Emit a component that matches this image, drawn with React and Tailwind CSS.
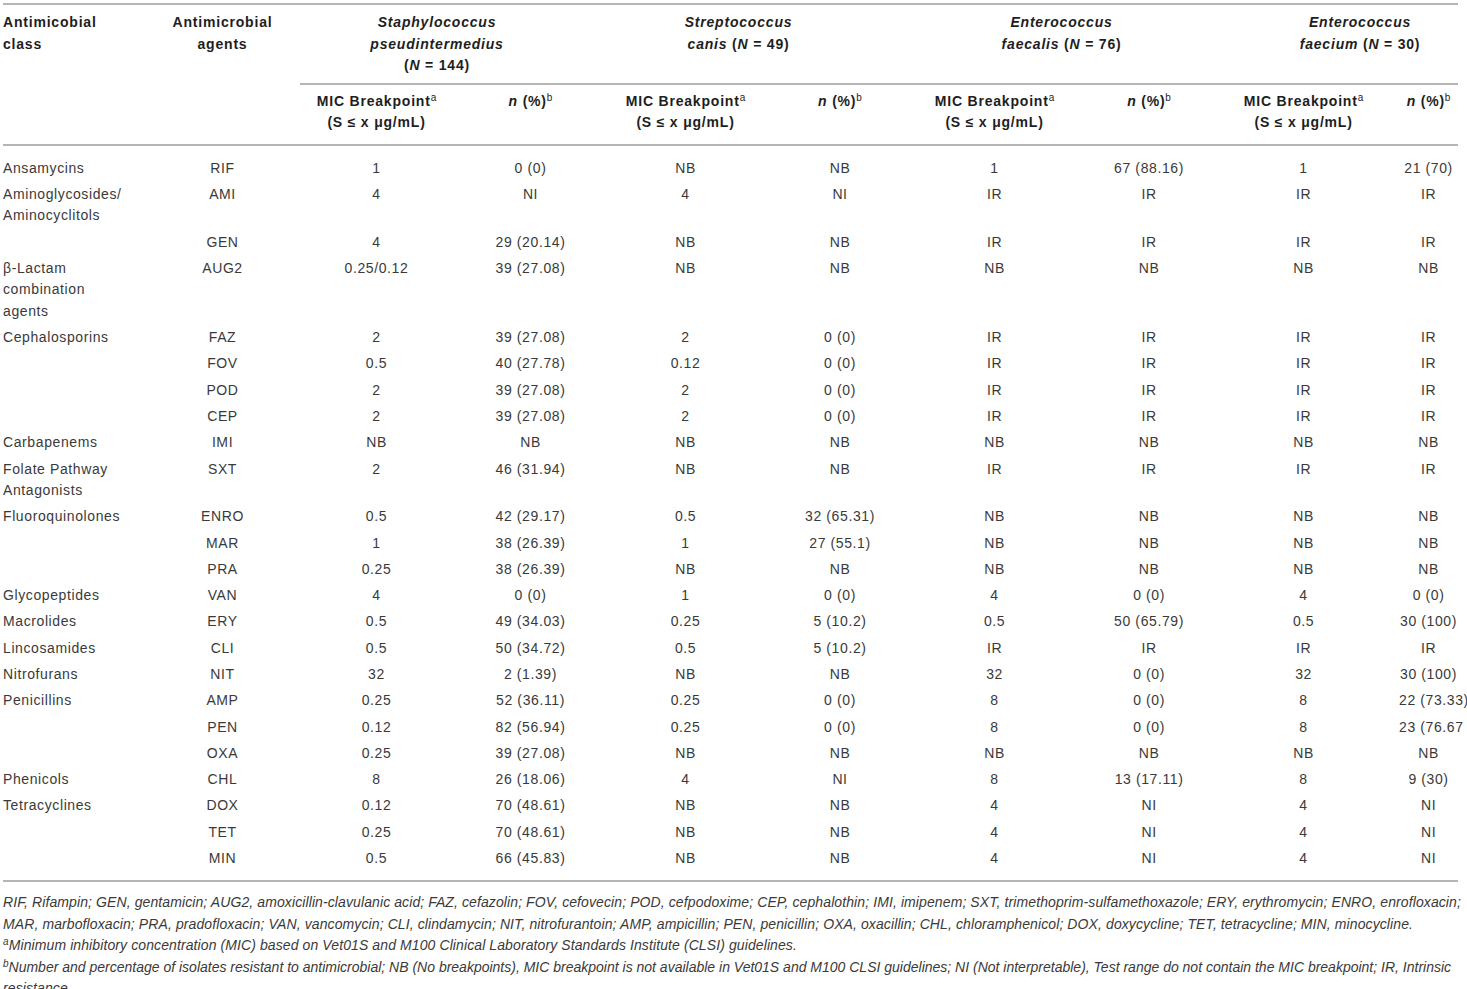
import React from "react";

const rows = [
    ["Ansamycins", "RIF", "1", "0 (0)", "NB", "NB", "1", "67 (88.16)", "1", "21 (70)"],
    [["Aminoglycosides/", "Aminocyclitols"], "AMI", "4", "NI", "4", "NI", "IR", "IR", "IR", "IR"],
    ["", "GEN", "4", "29 (20.14)", "NB", "NB", "IR", "IR", "IR", "IR"],
    [["β-Lactam", "combination", "agents"], "AUG2", "0.25/0.12", "39 (27.08)", "NB", "NB", "NB", "NB", "NB", "NB"],
    ["Cephalosporins", "FAZ", "2", "39 (27.08)", "2", "0 (0)", "IR", "IR", "IR", "IR"],
    ["", "FOV", "0.5", "40 (27.78)", "0.12", "0 (0)", "IR", "IR", "IR", "IR"],
    ["", "POD", "2", "39 (27.08)", "2", "0 (0)", "IR", "IR", "IR", "IR"],
    ["", "CEP", "2", "39 (27.08)", "2", "0 (0)", "IR", "IR", "IR", "IR"],
    ["Carbapenems", "IMI", "NB", "NB", "NB", "NB", "NB", "NB", "NB", "NB"],
    [["Folate Pathway", "Antagonists"], "SXT", "2", "46 (31.94)", "NB", "NB", "IR", "IR", "IR", "IR"],
    ["Fluoroquinolones", "ENRO", "0.5", "42 (29.17)", "0.5", "32 (65.31)", "NB", "NB", "NB", "NB"],
    ["", "MAR", "1", "38 (26.39)", "1", "27 (55.1)", "NB", "NB", "NB", "NB"],
    ["", "PRA", "0.25", "38 (26.39)", "NB", "NB", "NB", "NB", "NB", "NB"],
    ["Glycopeptides", "VAN", "4", "0 (0)", "1", "0 (0)", "4", "0 (0)", "4", "0 (0)"],
    ["Macrolides", "ERY", "0.5", "49 (34.03)", "0.25", "5 (10.2)", "0.5", "50 (65.79)", "0.5", "30 (100)"],
    ["Lincosamides", "CLI", "0.5", "50 (34.72)", "0.5", "5 (10.2)", "IR", "IR", "IR", "IR"],
    ["Nitrofurans", "NIT", "32", "2 (1.39)", "NB", "NB", "32", "0 (0)", "32", "30 (100)"],
    ["Penicillins", "AMP", "0.25", "52 (36.11)", "0.25", "0 (0)", "8", "0 (0)", "8", "22 (73.33)"],
    ["", "PEN", "0.12", "82 (56.94)", "0.25", "0 (0)", "8", "0 (0)", "8", "23 (76.67"],
    ["", "OXA", "0.25", "39 (27.08)", "NB", "NB", "NB", "NB", "NB", "NB"],
    ["Phenicols", "CHL", "8", "26 (18.06)", "4", "NI", "8", "13 (17.11)", "8", "9 (30)"],
    ["Tetracyclines", "DOX", "0.12", "70 (48.61)", "NB", "NB", "4", "NI", "4", "NI"],
    ["", "TET", "0.25", "70 (48.61)", "NB", "NB", "4", "NI", "4", "NI"],
    ["", "MIN", "0.5", "66 (45.83)", "NB", "NB", "4", "NI", "4", "NI"],
];

const Mic = () => (
    <th className="align-top font-bold pt-[6px] pb-[10px] text-center">
        MIC Breakpoint<sup className="text-[10px] font-normal tracking-normal">a</sup>
        <br />
        (S ≤ x μg/mL)
    </th>
);

const Pct = ({ last }) => (
    <th className={`align-top font-bold pt-[6px] pb-[10px] text-center ${last ? "pl-[18px]" : ""}`}>
        <i>n</i> (%)<sup className="text-[10px] font-normal tracking-normal">b</sup>
    </th>
);

const App = () => {
    return (
        <div className="w-full bg-white pl-[3px] pt-[3px] text-[#3a3a3a]" style={{ fontFamily: "'Liberation Sans', Arial, sans-serif" }}>
            <table className="table-fixed border-collapse w-[1455px] text-[14px] leading-[21.5px] tracking-[0.6px]">
                <colgroup>
                    <col className="w-[142px]" />
                    <col className="w-[155px]" />
                    <col className="w-[153px]" />
                    <col className="w-[155px]" />
                    <col className="w-[155px]" />
                    <col className="w-[154px]" />
                    <col className="w-[155px]" />
                    <col className="w-[154px]" />
                    <col className="w-[155px]" />
                    <col className="w-[77px]" />
                </colgroup>
                <thead className="text-[#1e1e1e] tracking-[0.8px]">
                    <tr className="border-t-2 border-[#b5b5b5]">
                        <th rowSpan={2} className="align-top text-left font-bold pt-[7px] pb-[11px] border-b-2 border-[#b5b5b5]">
                            Antimicobial<br />class
                        </th>
                        <th rowSpan={2} className="align-top text-center font-bold pt-[7px] pb-[11px] border-b-2 border-[#b5b5b5]">
                            Antimicrobial<br />agents
                        </th>
                        <th colSpan={2} className="align-top text-center font-bold pt-[7px] pb-[6px] pr-[34px] border-b-2 border-[#b5b5b5]">
                            <i>Staphylococcus</i><br /><i>pseudintermedius</i><br />(<i>N</i> = 144)
                        </th>
                        <th colSpan={2} className="align-top text-center font-bold pt-[7px] pb-[6px] pr-[48px] border-b-2 border-[#b5b5b5]">
                            <i>Streptococcus</i><br /><i>canis</i> (<i>N</i> = 49)
                        </th>
                        <th colSpan={2} className="align-top text-center font-bold pt-[7px] pb-[6px] pr-[20px] border-b-2 border-[#b5b5b5]">
                            <i>Enterococcus</i><br /><i>faecalis</i> (<i>N</i> = 76)
                        </th>
                        <th colSpan={2} className="align-top text-center font-bold pt-[7px] pb-[6px] pl-[36px] border-b-2 border-[#b5b5b5]">
                            <i>Enterococcus</i><br /><i>faecium</i> (<i>N</i> = 30)
                        </th>
                    </tr>
                    <tr className="border-b-2 border-[#b5b5b5]">
                        <Mic />
                        <Pct />
                        <Mic />
                        <Pct />
                        <Mic />
                        <Pct />
                        <Mic />
                        <Pct last />
                    </tr>
                </thead>
                <tbody className="border-b-2 border-[#b5b5b5]">
                    {rows.map((r, i) => {
                        const pad = i === 0 ? "pt-[12px] pb-[2.4px]" : i === rows.length - 1 ? "pt-[2.4px] pb-[11px]" : "py-[2.4px]";
                        return (
                            <tr key={i}>
                                <td className={`align-top text-left ${pad}`}>
                                    {Array.isArray(r[0]) ? r[0].map((t, k) => (
                                        <React.Fragment key={k}>{k > 0 && <br />}{t}</React.Fragment>
                                    )) : r[0]}
                                </td>
                                {r.slice(1).map((c, j) => (
                                    <td key={j} className={`align-top text-center whitespace-nowrap ${pad} ${j === 8 ? "pl-[18px]" : ""}`}>
                                        {c}
                                    </td>
                                ))}
                            </tr>
                        );
                    })}
                </tbody>
            </table>
            <div className="mt-[10px] text-[14px] leading-[21.5px] italic tracking-[0.1px] text-[#3a3a3a] w-[1458px] whitespace-nowrap">
                <p>RIF, Rifampin; GEN, gentamicin; AUG2, amoxicillin-clavulanic acid; FAZ, cefazolin; FOV, cefovecin; POD, cefpodoxime; CEP, cephalothin; IMI, imipenem; SXT, trimethoprim-sulfamethoxazole; ERY, erythromycin; ENRO, enrofloxacin;</p>
                <p>MAR, marbofloxacin; PRA, pradofloxacin; VAN, vancomycin; CLI, clindamycin; NIT, nitrofurantoin; AMP, ampicillin; PEN, penicillin; OXA, oxacillin; CHL, chloramphenicol; DOX, doxycycline; TET, tetracycline; MIN, minocycline.</p>
                <p><sup className="text-[10px]">a</sup>Minimum inhibitory concentration (MIC) based on Vet01S and M100 Clinical Laboratory Standards Institute (CLSI) guidelines.</p>
                <p className="tracking-normal"><sup className="text-[10px]">b</sup>Number and percentage of isolates resistant to antimicrobial; NB (No breakpoints), MIC breakpoint is not available in Vet01S and M100 CLSI guidelines; NI (Not interpretable), Test range do not contain the MIC breakpoint; IR, Intrinsic</p>
                <p>resistance.</p>
            </div>
        </div>
    );
};

export default App;
